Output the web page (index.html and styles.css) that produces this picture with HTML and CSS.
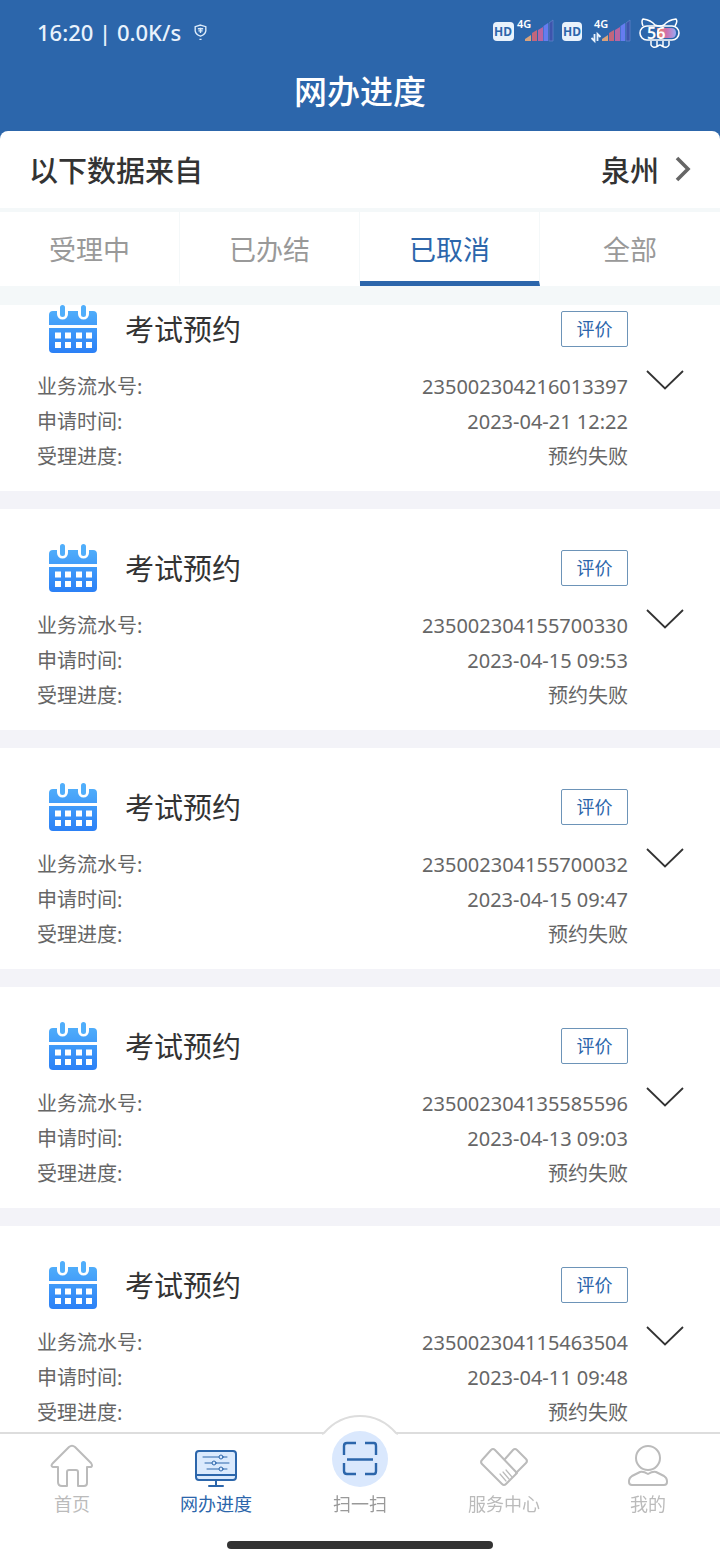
FILE: index.html
```html
<!DOCTYPE html>
<html lang="zh-CN">

<head>
  <meta charset="utf-8">
  <meta name="viewport" content="width=device-width, initial-scale=1">
  <title>网办进度</title>
  <link rel="stylesheet" href="styles.css">
</head>

<body>

  <!-- общие иконки карточек -->
  <svg class="sprite" aria-hidden="true">
    <defs>
      <linearGradient id="calendar-fill" x1="0" y1="0" x2="0" y2="50" gradientUnits="userSpaceOnUse">
        <stop offset="0" stop-color="#55b4fb"></stop>
        <stop offset="1" stop-color="#2a7ff6"></stop>
      </linearGradient>
      <symbol id="calendar" viewBox="0 0 50 50">
        <path fill="url(#calendar-fill)" d="M1 21V11q0-4 4-4h4v3a5.500 5.500 0 0 0 11 0V7h10v3a5.500 5.500 0 0 0 11 0V7h4q4 0 4 4v10zM1 24h48v21q0 4-4 4H5q-4 0-4-4z"></path>
        <path stroke="#50aefb" stroke-width="5" stroke-linecap="round" d="M14.500 3.500v7M35.500 3.500v7"></path>
        <path stroke="#fff" stroke-width="6" d="M7 31.500h6m4 0h6m5 0h6m4 0h6M7 41h6m4 0h6m5 0h6m4 0h6"></path>
      </symbol>
      <symbol id="arrow" viewBox="0 0 38 20">
        <path fill="none" stroke="#333" stroke-width="1.800" d="M1 1l18 17.500L37 1"></path>
      </symbol>
    </defs>
  </svg>

  <div class="app">
    <header class="header">
      <div class="status">
        <span>16:20 | 0.0K/s</span>
        <svg class="status-shield" viewBox="0 0 12 16" aria-hidden="true">
          <path fill="none" stroke="#dcebfa" stroke-width="1.300" d="M6 1l5 1.500v4Q10.500 10 6 11.500 1.500 10 1 6.500v-4z"></path>
          <path fill="none" stroke="#dcebfa" stroke-width="1.300" d="M3.500 4.500h5M6 3.500v5M4 6.500h4M5 14.500h2"></path>
        </svg>
        <svg class="status-icons" viewBox="0 0 190 36" aria-hidden="true">
          <defs>
            <linearGradient id="battery-fill">
              <stop offset="0" stop-color="#f08a58"></stop>
              <stop offset=".5" stop-color="#cf6fae"></stop>
              <stop offset="1" stop-color="#9aa9f3"></stop>
            </linearGradient>
            <g id="signal">
              <path fill="#d8a27c" d="M0 22v-2l6-4v6z"></path>
              <path fill="#c2667c" d="M7 22v-8l5-3v11z"></path>
              <path fill="#b765a2" d="M13 22v-11l5-3v14z"></path>
              <path fill="#657cf0" d="M18.500 22V7l4.500-3v18z"></path>
              <path fill="#3d55ac" stroke="#6485cc" stroke-width=".7" d="M24 22V4l4-3v21z"></path>
            </g>
          </defs>
          <rect x="3" y="8" width="21" height="19" rx="4" fill="#e9f2fc"></rect>
          <text class="hd" x="13" y="22">HD</text>
          <text class="net" x="27" y="14">4G</text>
          <use href="#signal" x="35" y="5"></use>
          <rect x="72" y="8" width="20" height="19" rx="4" fill="#e9f2fc"></rect>
          <text class="hd" x="82" y="22">HD</text>
          <text class="net" x="104" y="14">4G</text>
          <path fill="none" stroke="#e9f2fc" stroke-width="1.800" d="M104.500 20v7l-3-3M107.500 27v-7l3 3"></path>
          <use href="#signal" x="112" y="5"></use>
          <rect x="150" y="12" width="39" height="14" rx="7" fill="#2c66ab" stroke="#fff" stroke-width="1.600"></rect>
          <path fill="url(#battery-fill)" d="M167 14h14q5 0 5 5t-5 5h-14z"></path>
          <path fill="none" stroke="#fff" stroke-width="1.500" d="M153 12q-2-5 0-7 8 1 12 6 5 2 9 0 4-5 12-6 2 2-1 7M161 27v4q2 4 7 1 2-2 4 0 5 3 7-1v-4M167 27v5M173 27v5"></path>
          <text class="battery" x="157" y="25">56</text>
        </svg>
      </div>
      <h1 class="title">网办进度</h1>
    </header>

    <button class="source" type="button">
      <span>以下数据来自</span>
      <span class="source-city">泉州
        <svg class="source-arrow" viewBox="0 0 16 26" aria-hidden="true">
          <path fill="none" stroke="#666" stroke-width="3.600" d="M2 2l11 11L2 24"></path>
        </svg>
      </span>
    </button>

    <nav class="tabs">
      <button class="tab" type="button">受理中</button>
      <button class="tab" type="button">已办结</button>
      <button class="tab active" type="button">已取消</button>
      <button class="tab" type="button">全部</button>
    </nav>

    <main class="list">
      <article class="card">
        <div class="card-main">
          <div class="card-head">
            <svg class="card-icon" aria-hidden="true"><use href="#calendar"></use></svg>
            <h2 class="card-title">考试预约</h2>
            <button class="rate" type="button">评价</button>
          </div>
          <dl class="info">
            <dt>业务流水号:</dt>
            <dd>235002304216013397</dd>
            <dt>申请时间:</dt>
            <dd>2023-04-21 12:22</dd>
            <dt>受理进度:</dt>
            <dd>预约失败</dd>
          </dl>
        </div>
        <button class="toggle" type="button" aria-label="展开"><svg class="toggle-icon"><use href="#arrow"></use></svg></button>
      </article>

      <article class="card">
        <div class="card-main">
          <div class="card-head">
            <svg class="card-icon" aria-hidden="true"><use href="#calendar"></use></svg>
            <h2 class="card-title">考试预约</h2>
            <button class="rate" type="button">评价</button>
          </div>
          <dl class="info">
            <dt>业务流水号:</dt>
            <dd>235002304155700330</dd>
            <dt>申请时间:</dt>
            <dd>2023-04-15 09:53</dd>
            <dt>受理进度:</dt>
            <dd>预约失败</dd>
          </dl>
        </div>
        <button class="toggle" type="button" aria-label="展开"><svg class="toggle-icon"><use href="#arrow"></use></svg></button>
      </article>

      <article class="card">
        <div class="card-main">
          <div class="card-head">
            <svg class="card-icon" aria-hidden="true"><use href="#calendar"></use></svg>
            <h2 class="card-title">考试预约</h2>
            <button class="rate" type="button">评价</button>
          </div>
          <dl class="info">
            <dt>业务流水号:</dt>
            <dd>235002304155700032</dd>
            <dt>申请时间:</dt>
            <dd>2023-04-15 09:47</dd>
            <dt>受理进度:</dt>
            <dd>预约失败</dd>
          </dl>
        </div>
        <button class="toggle" type="button" aria-label="展开"><svg class="toggle-icon"><use href="#arrow"></use></svg></button>
      </article>

      <article class="card">
        <div class="card-main">
          <div class="card-head">
            <svg class="card-icon" aria-hidden="true"><use href="#calendar"></use></svg>
            <h2 class="card-title">考试预约</h2>
            <button class="rate" type="button">评价</button>
          </div>
          <dl class="info">
            <dt>业务流水号:</dt>
            <dd>235002304135585596</dd>
            <dt>申请时间:</dt>
            <dd>2023-04-13 09:03</dd>
            <dt>受理进度:</dt>
            <dd>预约失败</dd>
          </dl>
        </div>
        <button class="toggle" type="button" aria-label="展开"><svg class="toggle-icon"><use href="#arrow"></use></svg></button>
      </article>

      <article class="card">
        <div class="card-main">
          <div class="card-head">
            <svg class="card-icon" aria-hidden="true"><use href="#calendar"></use></svg>
            <h2 class="card-title">考试预约</h2>
            <button class="rate" type="button">评价</button>
          </div>
          <dl class="info">
            <dt>业务流水号:</dt>
            <dd>235002304115463504</dd>
            <dt>申请时间:</dt>
            <dd>2023-04-11 09:48</dd>
            <dt>受理进度:</dt>
            <dd>预约失败</dd>
          </dl>
        </div>
        <button class="toggle" type="button" aria-label="展开"><svg class="toggle-icon"><use href="#arrow"></use></svg></button>
      </article>
    </main>

    <footer class="footer">
      <nav class="menu">
        <a class="menu-item" href="#home">
          <svg class="menu-icon" viewBox="0 0 48 44" aria-hidden="true">
            <path d="M10 23H5q-3-1 0-4L21 3q3-2.500 6 0l16 16q2 3 0 4h-4v16q0 3-3 3h-6V28q0-2-2-2h-7q-2 0-2 2v14h-5q-4 0-4-4z"></path>
          </svg>
          首页
        </a>
        <a class="menu-item current" href="#progress">
          <svg class="menu-icon" viewBox="0 0 48 44" aria-hidden="true">
            <rect x="4" y="7" width="40" height="29" rx="3" fill="#dbeafd"></rect>
            <path d="M4 31h40M24 36v5M17 42h14"></path>
            <path stroke-width="1" d="M11 13h16m4 0h4M13 19h7m4 0h13M15 25h12m4 0h4"></path>
            <circle cx="29" cy="13" r="2" stroke-width="1"></circle>
            <circle cx="22" cy="19" r="2" stroke-width="1"></circle>
            <circle cx="29" cy="25" r="2" stroke-width="1"></circle>
          </svg>
          网办进度
        </a>
        <a class="menu-item scan" href="#scan">
          <svg class="scan-icon" viewBox="0 0 76 74" aria-hidden="true">
            <path fill="#fff" d="M0 22l2-3q15-17 36-17t36 17l2 3z"></path>
            <path fill="none" stroke="#ddd" stroke-width="2" d="M0 20l2-1q15-17 36-17t36 17l2 1"></path>
            <circle cx="38" cy="45" r="28" fill="#dae8fd"></circle>
            <path fill="none" stroke="#2c66ab" stroke-width="2.400" d="M22 41V32q0-3 3-3h9M43 29h9q2 0 2 3v9M22 49v8q0 3 3 3h9M43 60h9q2 0 2-3v-8M25 45.500h26"></path>
          </svg>
          扫一扫
        </a>
        <a class="menu-item" href="#service">
          <svg class="menu-icon" viewBox="0 0 48 44" aria-hidden="true">
            <path d="M11 6q2-2 4 0l22 23-11 11q-2 2-4 0L2 20q-2-2 0-4z"></path>
            <path d="M25 15l8-9q2-2 4 0l9 9q2 2 0 4L36 29"></path>
            <path stroke-width="1.200" d="M26 26l6 7M23 28l6 7M20 30l6 7"></path>
          </svg>
          服务中心
        </a>
        <a class="menu-item" href="#mine">
          <svg class="menu-icon" viewBox="0 0 48 44" aria-hidden="true">
            <circle cx="24" cy="14" r="12"></circle>
            <path d="M16 28q3-1 8 2 5-3 8-2l8 4q3 2 3 5v1q0 3-3 3H8q-3 0-3-3v-1q0-3 3-5z"></path>
          </svg>
          我的
        </a>
      </nav>
      <div class="home-bar"></div>
    </footer>
  </div>

</body>

</html>
```
FILE: styles.css
```css
* {
  box-sizing: border-box;
}

body {
  margin: 0;
  font-family: "Noto Sans", "Noto Sans CJK SC", sans-serif;
  color: #333;
}

button {
  margin: 0;
  padding: 0;
  border: none;
  background: none;
  font: inherit;
  color: inherit;
  cursor: pointer;
}

svg {
  display: block;
}

.sprite {
  position: absolute;
  width: 0;
  height: 0;
}

.app {
  display: flex;
  flex-direction: column;
  height: 100vh;
  background-color: #2c66ab;
}

/* шапка */

.header {
  padding-bottom: 11px;
  color: #fff;
}

.status {
  display: flex;
  align-items: center;
  height: 64px;
  padding: 0 40px 0 37px;
  font-size: 22px;
  font-weight: 500;
  line-height: 30px;
  color: #e9f2fc;
}

.status-shield {
  width: 13px;
  height: 17px;
  margin-left: 13px;
}

.status-icons {
  width: 190px;
  height: 36px;
  margin-left: auto;
}

.hd {
  font-size: 12px;
  font-weight: bold;
  text-anchor: middle;
  fill: #2c66ab;
}

.net {
  font-size: 11px;
  font-weight: 600;
  fill: #fff;
}

.battery {
  font-size: 16px;
  font-weight: 600;
  fill: #fff;
}

.title {
  margin: 0;
  font-size: 33px;
  font-weight: 500;
  line-height: 56px;
  text-align: center;
}

/* город */

.source {
  display: flex;
  justify-content: space-between;
  align-items: center;
  height: 77px;
  padding: 0 29px 2px;
  border-radius: 8px 8px 0 0;
  background-color: #fff;
  font-size: 29px;
  font-weight: 500;
}

.source-city {
  display: flex;
  align-items: center;
  gap: 16px;
}

.source-arrow {
  width: 16px;
  height: 26px;
}

/* вкладки */

.tabs {
  display: flex;
  border-top: 4px solid #f4f8f9;
  border-bottom: 19px solid #f4f8f9;
  background-color: #fff;
}

.tab {
  width: 25%;
  height: 74px;
  border-right: 1px solid #f4f8f9;
  border-bottom: 5px solid transparent;
  padding-top: 4px;
  font-size: 27px;
  color: #999;
}

.tab:last-child {
  border-right: none;
}

.tab.active {
  border-bottom-color: #2c66ab;
  color: #2c66ab;
}

/* список */

.list {
  flex: 1;
  min-height: 0;
  overflow-y: auto;
  scrollbar-width: none;
  background-color: #f3f3f8;
}

.card {
  display: flex;
  gap: 18px;
  margin-bottom: 18px;
  padding: 35px 36px 17px 37px;
  background-color: #fff;
}

.card:first-child {
  padding-top: 0;
}

.card-main {
  flex: 1;
}

.card-head {
  display: flex;
  align-items: center;
  gap: 27px;
  height: 48px;
  margin-bottom: 16px;
  padding-left: 11px;
}

.card-icon {
  flex: none;
  width: 50px;
  height: 50px;
}

.card-title {
  margin: 0;
  padding-bottom: 2px;
  font-size: 29px;
  font-weight: normal;
}

.rate {
  width: 67px;
  height: 36px;
  margin-left: auto;
  border: 1px solid #6d94b8;
  border-radius: 2px;
  font-size: 18px;
  line-height: 32px;
  color: #2c66ab;
}

.info {
  display: grid;
  grid-template-columns: auto 1fr;
  margin: 0;
  font-size: 20px;
  line-height: 35px;
  color: #666;
}

.info dd {
  margin: 0;
  text-align: right;
}

.toggle {
  align-self: flex-start;
  margin-top: 65px;
}

.toggle-icon {
  width: 38px;
  height: 20px;
}

/* нижнее меню */

.footer {
  border-top: 2px solid #ddd;
  background-color: #fff;
}

.menu {
  display: flex;
  height: 83px;
}

.menu-item {
  display: flex;
  flex: 1;
  flex-direction: column;
  justify-content: flex-end;
  align-items: center;
  gap: 3px;
  font-size: 18px;
  line-height: 26px;
  color: #bbb;
  text-decoration: none;
}

.menu-item.current {
  color: #2c66ab;
}

.menu-item.scan {
  color: #999;
}

.menu-icon {
  width: 48px;
  height: 44px;
  fill: none;
  stroke: currentColor;
  stroke-width: 2;
  stroke-linecap: round;
  stroke-linejoin: round;
}

.scan-icon {
  flex: none;
  width: 76px;
  height: 74px;
}

.home-bar {
  width: 37%;
  height: 8px;
  margin: 24px auto 11px;
  border-radius: 4px;
  background-color: #333;
}
```
